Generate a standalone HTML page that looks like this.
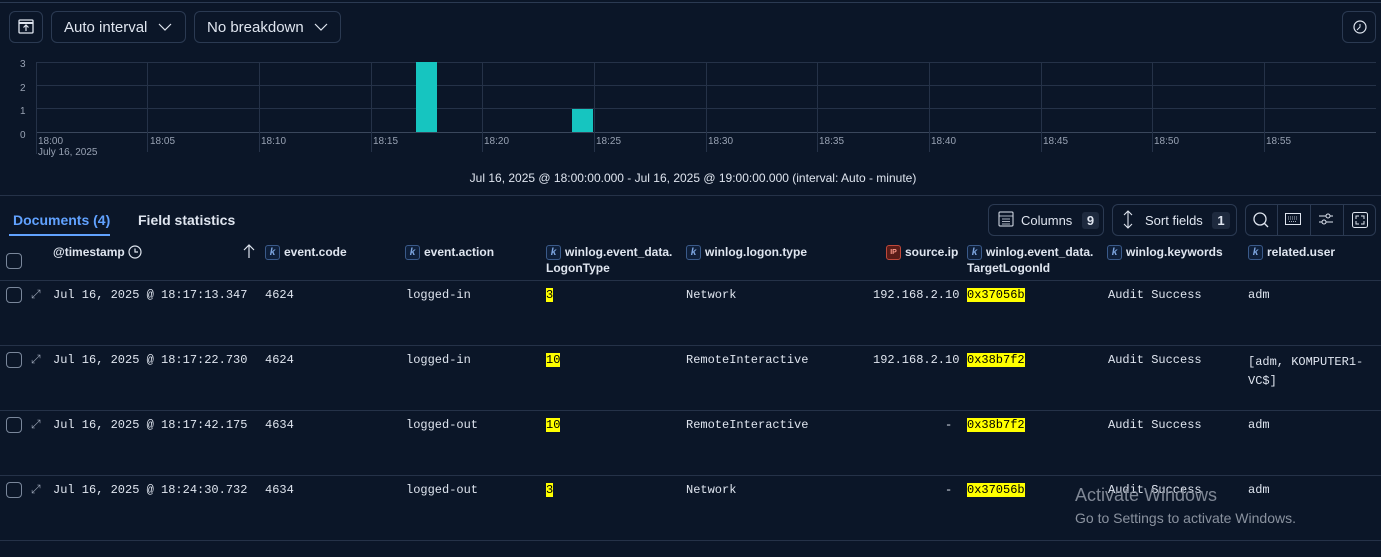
<!DOCTYPE html><html><head><style>
body{margin:0;width:1381px;height:557px;background:#0b1628;font-family:"Liberation Sans",sans-serif;color:#dfe5ef;position:relative;overflow:hidden}
.a{position:absolute}
.btn{position:absolute;border:1px solid #2b3a52;border-radius:6px;box-sizing:border-box}
.mono{font-family:"Liberation Mono",monospace;font-size:12px;color:#dfe5ef}
.hl{background:#ffff00;color:#000}
.k{display:inline-block;width:13px;height:13px;border:1px solid #3a5a8a;border-radius:3px;font-size:10px;font-style:italic;color:#7ea6e0;text-align:center;line-height:13px;vertical-align:middle;margin-right:4px;background:#0e1f3a}
.h{position:absolute;top:244px;font-size:12px;font-weight:bold;color:#dfe5ef;line-height:16px}
.sep{position:absolute;left:0;width:1381px;height:1px;background:#253248}
.cb{position:absolute;left:6px;width:14px;height:14px;border:1px solid #7a879b;border-radius:4px}
.gl{position:absolute;background:#253248}
.tk{position:absolute;top:136px;font-size:10px;color:#98a2b3}
</style></head><body>
<div class="sep" style="top:2px;background:#2b3a52"></div>
<div class="btn" style="left:9px;top:11px;width:34px;height:32px"><svg width="32" height="30" viewBox="0 0 32 30"><rect x="9" y="8" width="14" height="13" rx="1" fill="none" stroke="#dfe5ef" stroke-width="1.3"/><line x1="9" y1="11" x2="23" y2="11" stroke="#dfe5ef" stroke-width="2"/><path d="M16 19v-6M13.5 15.5l2.5-2.5 2.5 2.5" fill="none" stroke="#dfe5ef" stroke-width="1.2"/></svg></div>
<div class="btn" style="left:51px;top:11px;width:135px;height:32px;font-size:15px;padding:7px 12px">Auto interval <svg width="14" height="10" style="margin-left:6px"><path d="M1 2l6 6 6-6" fill="none" stroke="#dfe5ef" stroke-width="1.2"/></svg></div>
<div class="btn" style="left:194px;top:11px;width:147px;height:32px;font-size:15px;padding:7px 12px">No breakdown <svg width="14" height="10" style="margin-left:6px"><path d="M1 2l6 6 6-6" fill="none" stroke="#dfe5ef" stroke-width="1.2"/></svg></div>
<div class="btn" style="left:1342px;top:11px;width:34px;height:32px"><svg width="32" height="30"><circle cx="17" cy="15" r="6" fill="none" stroke="#dfe5ef" stroke-width="1.2"/><path d="M17 12v3l-3 3" stroke="#dfe5ef" fill="none"/></svg></div>
<!-- chart -->
<div class="gl" style="left:36px;top:62px;width:1340px;height:1px"></div>
<div class="gl" style="left:36px;top:85px;width:1340px;height:1px"></div>
<div class="gl" style="left:36px;top:108px;width:1340px;height:1px"></div>
<div class="gl" style="left:36px;top:132px;width:1340px;height:1px;background:#3a475c"></div>
<div class="gl" style="left:36px;top:62px;width:1px;height:92px"></div>
<div class="gl" style="left:147px;top:62px;width:1px;height:90px"></div>
<div class="gl" style="left:259px;top:62px;width:1px;height:90px"></div>
<div class="gl" style="left:371px;top:62px;width:1px;height:90px"></div>
<div class="gl" style="left:482px;top:62px;width:1px;height:90px"></div>
<div class="gl" style="left:594px;top:62px;width:1px;height:90px"></div>
<div class="gl" style="left:706px;top:62px;width:1px;height:90px"></div>
<div class="gl" style="left:817px;top:62px;width:1px;height:90px"></div>
<div class="gl" style="left:929px;top:62px;width:1px;height:90px"></div>
<div class="gl" style="left:1041px;top:62px;width:1px;height:90px"></div>
<div class="gl" style="left:1152px;top:62px;width:1px;height:90px"></div>
<div class="gl" style="left:1264px;top:62px;width:1px;height:90px"></div>
<div class="a" style="left:416px;top:62px;width:21px;height:70px;background:#16c5c0"></div>
<div class="a" style="left:572px;top:109px;width:21px;height:23px;background:#16c5c0"></div>
<div class="a" style="left:20px;top:53px;font-size:10px;color:#98a2b3;line-height:23.5px">3<br>2<br>1<br>0</div>
<div class="tk" style="left:38px">18:00<br>July 16, 2025</div>
<div class="tk" style="left:150px">18:05</div><div class="tk" style="left:261px">18:10</div><div class="tk" style="left:373px">18:15</div>
<div class="tk" style="left:484px">18:20</div><div class="tk" style="left:596px">18:25</div><div class="tk" style="left:708px">18:30</div>
<div class="tk" style="left:819px">18:35</div><div class="tk" style="left:931px">18:40</div><div class="tk" style="left:1043px">18:45</div>
<div class="tk" style="left:1154px">18:50</div><div class="tk" style="left:1266px">18:55</div>
<div class="a" style="left:0;width:1381px;top:171px;text-align:center;font-size:12px;color:#dfe5ef;padding-left:5px;box-sizing:border-box">Jul 16, 2025 @ 18:00:00.000 - Jul 16, 2025 @ 19:00:00.000 (interval: Auto - minute)</div>
<div class="sep" style="top:195px"></div>
<div class="a" style="left:13px;top:212px;font-size:14px;font-weight:bold;color:#61a2ff">Documents (4)</div>
<div class="a" style="left:9px;top:234px;width:101px;height:2px;background:#61a2ff"></div>
<div class="a" style="left:138px;top:212px;font-size:14px;font-weight:bold">Field statistics</div>
<div class="btn" style="left:988px;top:204px;width:116px;height:32px;font-size:13px;padding:8px 0 0 32px">Columns <span style="background:#1e2a3e;border-radius:3px;padding:1px 5px;margin-left:6px;font-weight:bold">9</span></div>
<svg class="a" style="left:998px;top:211px" width="16" height="16"><rect x="1" y="1" width="14" height="14" rx="1" fill="none" stroke="#dfe5ef"/><path d="M1 5h14M4 8h8M4 10.5h8M4 13h8" stroke="#dfe5ef" stroke-width="0.8"/></svg>
<div class="btn" style="left:1112px;top:204px;width:125px;height:32px;font-size:13px;padding:8px 0 0 32px">Sort fields <span style="background:#1e2a3e;border-radius:3px;padding:1px 5px;margin-left:6px;font-weight:bold">1</span></div>
<svg class="a" style="left:1122px;top:210px" width="12" height="20"><path d="M6 1v17M2 5l4-4 4 4M2 14l4 4 4-4" fill="none" stroke="#dfe5ef" stroke-width="1.1"/></svg>
<div class="btn" style="left:1245px;top:204px;width:131px;height:32px"></div>
<div class="a" style="left:1277px;top:204px;width:1px;height:32px;background:#2b3a52"></div>
<div class="a" style="left:1310px;top:204px;width:1px;height:32px;background:#2b3a52"></div>
<div class="a" style="left:1343px;top:204px;width:1px;height:32px;background:#2b3a52"></div>
<svg class="a" style="left:1252px;top:211px" width="18" height="18"><circle cx="8" cy="8" r="6" fill="none" stroke="#dfe5ef" stroke-width="1.3"/><line x1="12" y1="12" x2="16" y2="16" stroke="#dfe5ef" stroke-width="1.3"/></svg>
<svg class="a" style="left:1285px;top:213px" width="16" height="12"><rect x="0.5" y="0.5" width="15" height="11" fill="none" stroke="#dfe5ef"/><path d="M3 4h10M3 6h10M4 8.5h8" stroke="#dfe5ef" stroke-width="0.8" stroke-dasharray="1 1"/></svg>
<svg class="a" style="left:1318px;top:212px" width="16" height="14"><path d="M1 4h14M1 10h14" stroke="#dfe5ef"/><circle cx="10" cy="4" r="2" fill="#0b1628" stroke="#dfe5ef"/><circle cx="6" cy="10" r="2" fill="#0b1628" stroke="#dfe5ef"/></svg>
<svg class="a" style="left:1352px;top:212px" width="16" height="16"><rect x="0.5" y="0.5" width="15" height="15" rx="2" fill="none" stroke="#dfe5ef"/><path d="M4 7V4h3M9 4h3v3M12 9v3H9M7 12H4V9" fill="none" stroke="#dfe5ef"/></svg>
<!-- header -->
<div class="cb" style="top:253px"></div>
<div class="h" style="left:53px">@timestamp <svg width="14" height="14" style="vertical-align:-3px"><circle cx="7" cy="7" r="6" fill="none" stroke="#dfe5ef" stroke-width="1.2"/><path d="M7 3.5V7h3" fill="none" stroke="#dfe5ef" stroke-width="1.2"/></svg></div>
<svg class="a" style="left:242px;top:243px" width="14" height="16"><path d="M7 15V2M2 7l5-5 5 5" fill="none" stroke="#dfe5ef" stroke-width="1.2"/></svg>
<div class="h" style="left:265px"><span class="k">k</span>event.code</div>
<div class="h" style="left:405px"><span class="k">k</span>event.action</div>
<div class="h" style="left:546px"><span class="k">k</span>winlog.event_data.<br>LogonType</div>
<div class="h" style="left:686px"><span class="k">k</span>winlog.logon.type</div>
<div class="h" style="left:886px"><span class="k" style="border-color:#c0483a;background:#5a1c18;color:#ff9a8a;font-style:normal;font-size:7px">IP</span>source.ip</div>
<div class="h" style="left:967px"><span class="k">k</span>winlog.event_data.<br>TargetLogonId</div>
<div class="h" style="left:1107px"><span class="k">k</span>winlog.keywords</div>
<div class="h" style="left:1248px"><span class="k">k</span>related.user</div>
<div class="sep" style="top:280px"></div>
<div class="sep" style="top:345px"></div>
<div class="sep" style="top:410px"></div>
<div class="sep" style="top:475px"></div>
<div class="sep" style="top:540px"></div>

<div class="cb" style="top:287px"></div><div class="a" style="left:31px;top:287px;font-size:12px;color:#98a2b3">&#x2922;</div>
<div class="a mono" style="left:53px;top:288px">Jul 16, 2025 @ 18:17:13.347</div><div class="a mono" style="left:265px;top:288px">4624</div><div class="a mono" style="left:406px;top:288px">logged-in</div><div class="a mono" style="left:546px;top:288px"><span class="hl">3</span></div><div class="a mono" style="left:686px;top:288px">Network</div><div class="a mono" style="left:873px;top:288px">192.168.2.10</div><div class="a mono" style="left:967px;top:288px"><span class="hl">0x37056b</span></div><div class="a mono" style="left:1108px;top:288px">Audit Success</div><div class="a mono" style="left:1248px;top:288px">adm</div>

<div class="cb" style="top:352px"></div><div class="a" style="left:31px;top:352px;font-size:12px;color:#98a2b3">&#x2922;</div>
<div class="a mono" style="left:53px;top:353px">Jul 16, 2025 @ 18:17:22.730</div><div class="a mono" style="left:265px;top:353px">4624</div><div class="a mono" style="left:406px;top:353px">logged-in</div><div class="a mono" style="left:546px;top:353px"><span class="hl">10</span></div><div class="a mono" style="left:686px;top:353px">RemoteInteractive</div><div class="a mono" style="left:873px;top:353px">192.168.2.10</div><div class="a mono" style="left:967px;top:353px"><span class="hl">0x38b7f2</span></div><div class="a mono" style="left:1108px;top:353px">Audit Success</div><div class="a mono" style="left:1248px;top:353px;line-height:19px">[adm, KOMPUTER1-<br>VC$]</div>

<div class="cb" style="top:417px"></div><div class="a" style="left:31px;top:417px;font-size:12px;color:#98a2b3">&#x2922;</div>
<div class="a mono" style="left:53px;top:418px">Jul 16, 2025 @ 18:17:42.175</div><div class="a mono" style="left:265px;top:418px">4634</div><div class="a mono" style="left:406px;top:418px">logged-out</div><div class="a mono" style="left:546px;top:418px"><span class="hl">10</span></div><div class="a mono" style="left:686px;top:418px">RemoteInteractive</div><div class="a mono" style="left:945px;top:418px">-</div><div class="a mono" style="left:967px;top:418px"><span class="hl">0x38b7f2</span></div><div class="a mono" style="left:1108px;top:418px">Audit Success</div><div class="a mono" style="left:1248px;top:418px">adm</div>

<div class="cb" style="top:482px"></div><div class="a" style="left:31px;top:482px;font-size:12px;color:#98a2b3">&#x2922;</div>
<div class="a mono" style="left:53px;top:483px">Jul 16, 2025 @ 18:24:30.732</div><div class="a mono" style="left:265px;top:483px">4634</div><div class="a mono" style="left:406px;top:483px">logged-out</div><div class="a mono" style="left:546px;top:483px"><span class="hl">3</span></div><div class="a mono" style="left:686px;top:483px">Network</div><div class="a mono" style="left:945px;top:483px">-</div><div class="a mono" style="left:967px;top:483px"><span class="hl">0x37056b</span></div><div class="a mono" style="left:1108px;top:483px">Audit Success</div><div class="a mono" style="left:1248px;top:483px">adm</div>

<div class="a" style="left:1075px;top:485px;font-size:18px;color:#7f8795">Activate Windows</div>
<div class="a" style="left:1075px;top:510px;font-size:14px;color:#8a929f">Go to Settings to activate Windows.</div>
</body></html>
